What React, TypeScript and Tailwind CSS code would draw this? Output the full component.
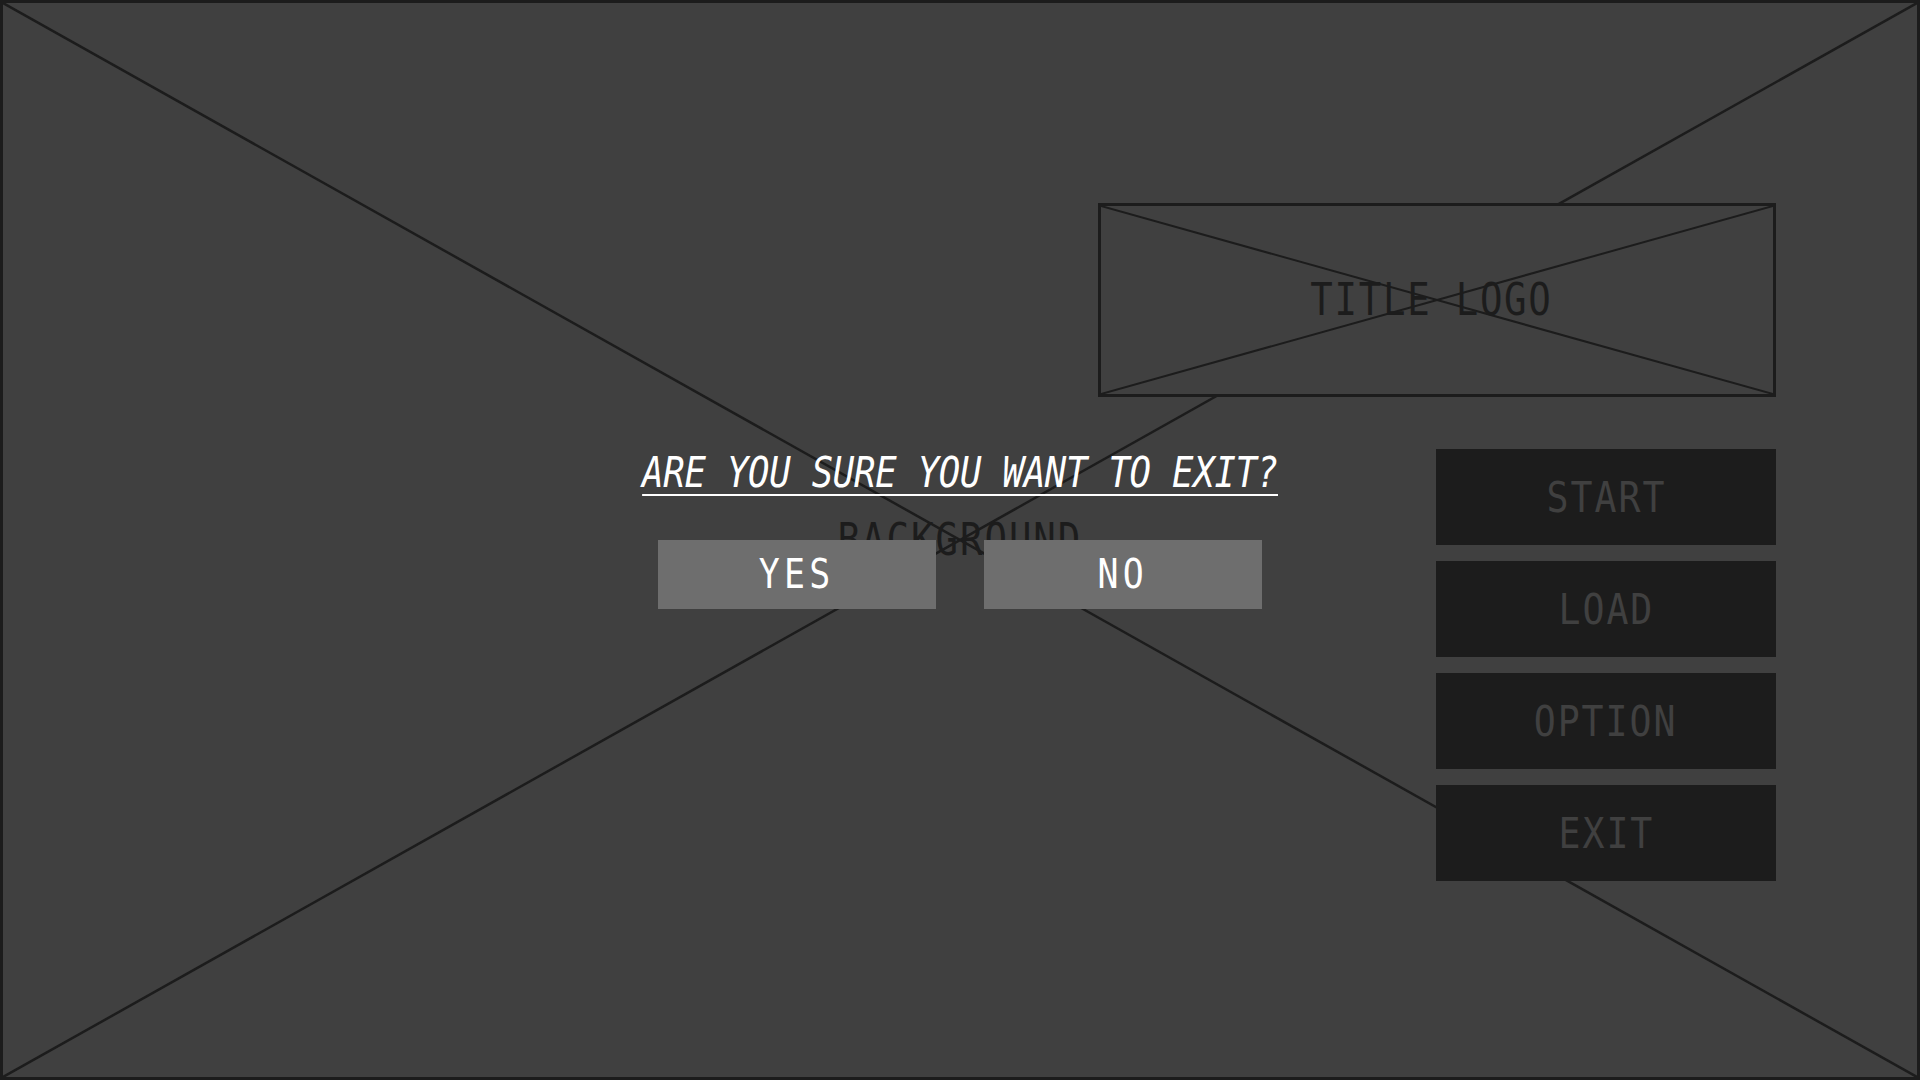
import React from "react";

const menuItems = ["START", "LOAD", "OPTION", "EXIT"];

const mono = "font-['DejaVu_Sans_Mono','Liberation_Mono',monospace]";

// narrow the mono glyphs a little, the mockup font is condensed
const Label = ({ text, className }: { text: string; className: string }) => (
  <span className={`inline-block origin-center scale-x-[0.85] whitespace-pre leading-none ${className}`}>
    {text}
  </span>
);

const Cross = ({ stroke = 2.5 }: { stroke?: number }) => (
  <svg
    className="pointer-events-none absolute inset-0 h-full w-full"
    viewBox="0 0 100 100"
    preserveAspectRatio="none"
  >
    <line x1="0" y1="0" x2="100" y2="100" stroke="#1c1c1c" strokeWidth={stroke} vectorEffect="non-scaling-stroke" />
    <line x1="100" y1="0" x2="0" y2="100" stroke="#1c1c1c" strokeWidth={stroke} vectorEffect="non-scaling-stroke" />
  </svg>
);

export default function App() {
  return (
    <div className={`relative h-[1080px] w-[1920px] overflow-hidden border-[3px] border-[#1c1c1c] bg-[#404040] ${mono}`}>
      <Cross />

      {/* placeholder label of the background art */}
      <div className="absolute inset-0 flex items-center justify-center">
        <Label text="BACKGROUND" className="text-[44px] tracking-[2.3px] text-[#1c1c1c]" />
      </div>

      {/* title + main menu */}
      <div className="relative flex flex-col items-end pt-[200px] pr-[141px]">
        <div className="relative flex h-[194px] w-[678px] items-center justify-center border-[3px] border-[#1c1c1c] bg-[#404040] pr-3">
          <Cross stroke={2} />
          <Label text="TITLE LOGO" className="relative text-[44px] tracking-[2px] text-[#1c1c1c]" />
        </div>

        <ul className="mt-[52px] flex w-[340px] flex-col gap-4">
          {menuItems.map((item) => (
            <li key={item} className="flex h-24 items-center justify-center bg-[#1c1c1c]">
              <Label text={item} className="text-[43px] tracking-[2.3px] text-[#404040]" />
            </li>
          ))}
        </ul>
      </div>

      {/* exit confirm dialog */}
      <div className="absolute inset-0 flex flex-col items-center pt-[449px]">
        <Label
          text="ARE YOU SURE YOU WANT TO EXIT?"
          className="text-[42px] italic tracking-[-0.35px] text-white underline decoration-2 underline-offset-[7px]"
        />
        <div className="mt-[46px] flex gap-12">
          {["YES", "NO"].map((b) => (
            <button key={b} className="flex h-[69px] w-[278px] items-center justify-center bg-[#6e6e6e]">
              <Label text={b} className="text-[41px] tracking-[5px] text-white" />
            </button>
          ))}
        </div>
      </div>
    </div>
  );
}
